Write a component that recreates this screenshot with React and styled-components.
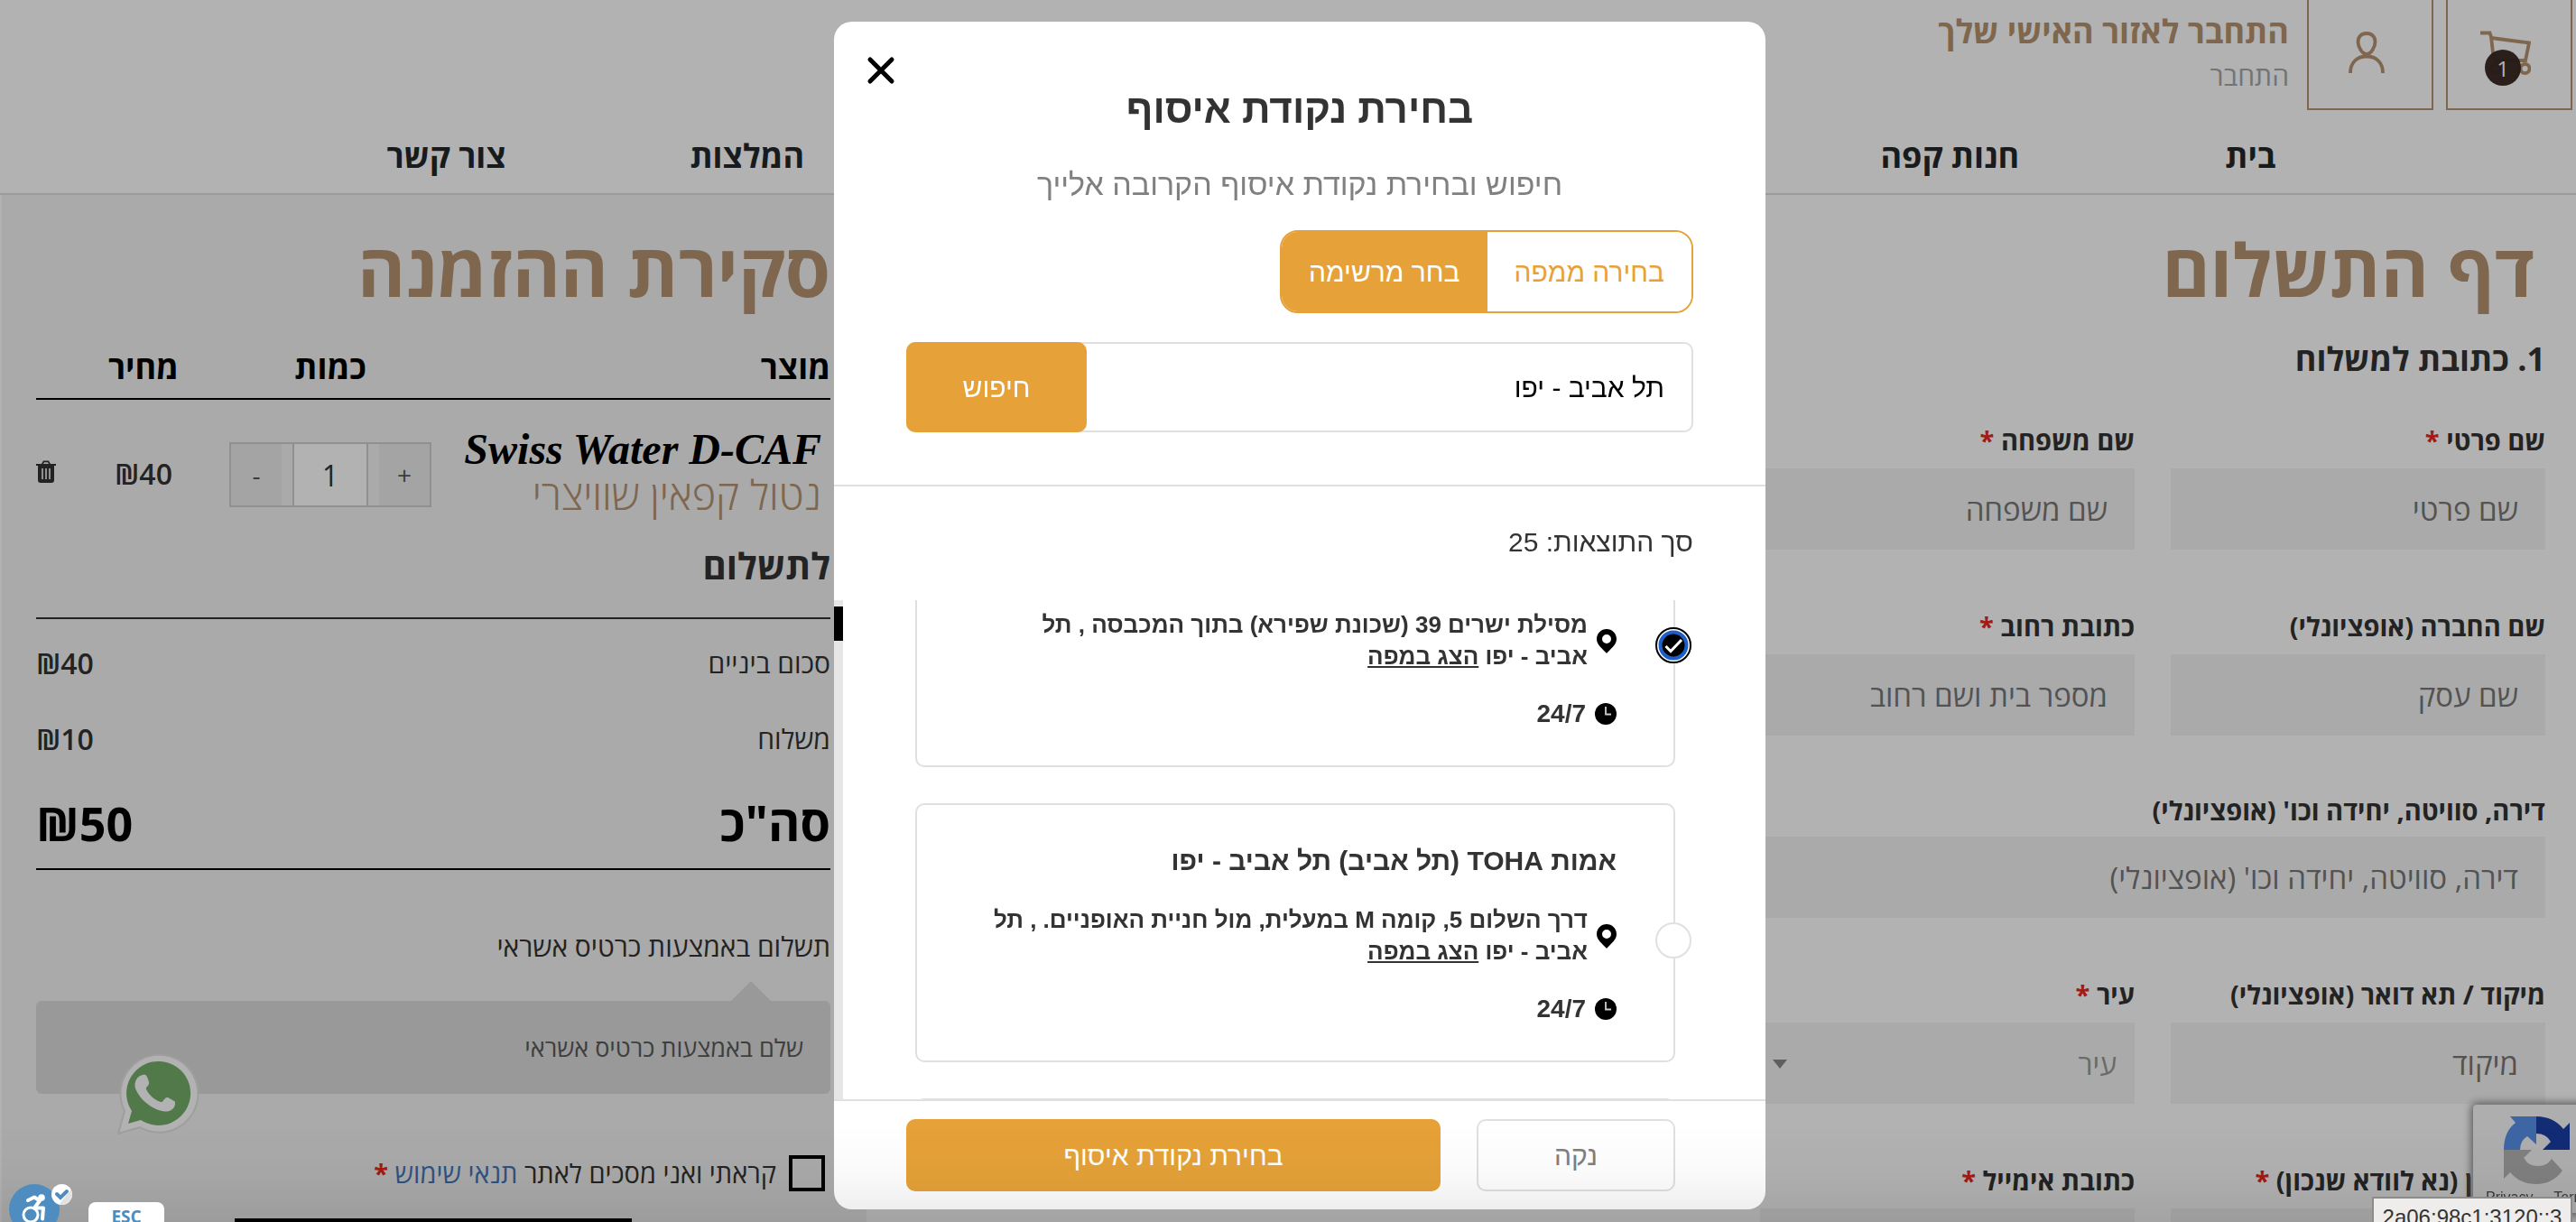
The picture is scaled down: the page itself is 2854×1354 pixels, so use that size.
import React from "react";
import styled, { createGlobalStyle, css } from "styled-components";

const BROWN = "#b69372";
const ORANGE = "#e6a238";
const LINE = "#e0e0e0";

const GlobalStyle = createGlobalStyle`
  *, *::before, *::after { box-sizing: border-box; }
  html, body { margin: 0; height: 100%; }
  body { overflow: hidden; background: #fff; }
  button, input, select { font: inherit; color: inherit; margin: 0; }
  h1, h2, h3, p { margin: 0; }
`;

const Page = styled.div`
  direction: rtl;
  height: 100vh;
  overflow: hidden;
  display: flex;
  flex-direction: column;
  background: #fff;
  color: #333;
  font-family: "Open Sans", "Noto Sans", sans-serif;
  font-size: 28px;
`;

/* Site header */

const Header = styled.header`
  flex: none;
  border-bottom: 2px solid #dedede;
`;

const TopBar = styled.div`
  display: flex;
  align-items: flex-start;
  height: 122px;
  padding-right: 4px;
  gap: 14px;
`;

const IconBox = styled.button`
  position: relative;
  width: 140px;
  height: 122px;
  padding: 0 8px 4px 0;
  display: grid;
  place-items: center;
  background: none;
  border: 2px solid ${BROWN};
  border-top: 0;
  color: ${BROWN};
`;

const CartCount = styled.span`
  position: absolute;
  left: 41px;
  top: 55px;
  width: 40px;
  height: 40px;
  border-radius: 50%;
  background: rgba(55, 38, 33, 0.97);
  color: #fff;
  font-size: 24px;
  line-height: 42px;
`;

const Account = styled.div`
  padding: 7px 6px 0 0;
`;

const AccountTitle = styled.p`
  color: ${BROWN};
  font-size: 36px;
  font-weight: 700;
  line-height: 56px;
`;

const AccountLink = styled.a`
  display: block;
  color: #a6a6a6;
  font-size: 30px;
  line-height: 42px;
  text-decoration: none;
`;

const Nav = styled.nav`
  height: 92px;
  padding: 10px 194px 0 328px;
  display: grid;
  grid-template-columns: repeat(7, 1fr);
  align-items: center;
  text-align: center;
`;

const NavLink = styled.a`
  grid-column: ${(p) => p.$column};
  color: #23272a;
  font-size: 36px;
  font-weight: 700;
  line-height: 48px;
  text-decoration: none;
`;

/* Checkout form */

const Main = styled.main`
  flex: 1;
  min-height: 0;
  display: flex;
  justify-content: space-between;
`;

const Form = styled.form`
  width: 870px;
  margin-right: 34px;
  padding-top: 22px;
`;

const PageTitle = styled.h1`
  padding-right: ${(p) => p.$indent || 0}px;
  color: ${BROWN};
  font-size: 81px;
  font-weight: 700;
  line-height: 120px;
`;

const SectionTitle = styled.h2`
  margin: 16px 0 48px;
  font-size: 36px;
  font-weight: 700;
  line-height: 48px;
`;

const Fields = styled.div`
  display: grid;
  grid-template-columns: 1fr 1fr;
  gap: 67px 40px;
`;

const Field = styled.div`
  grid-column: ${(p) => (p.$wide ? "1 / -1" : "auto")};
`;

const Label = styled.label`
  display: block;
  height: ${(p) => (p.$wide ? 45 : 49)}px;
  font-size: 29px;
  font-weight: 700;
  line-height: ${(p) => (p.$wide ? 32 : 36)}px;
  white-space: nowrap;
`;

const Required = styled.span`
  color: #e8281d;
  font-weight: 700;
`;

const fieldBox = css`
  width: 100%;
  height: 90px;
  border: 0;
  border-radius: 0;
  background: #f4f4f4;
`;

const TextBox = styled.input`
  ${fieldBox}
  padding: 0 30px;
  font-size: 33px;
  &::placeholder { color: #777; opacity: 1; }
`;

const SelectWrap = styled.div`
  position: relative;
`;

const Select = styled.select`
  ${fieldBox}
  appearance: none;
  padding: 0 20px;
  color: #999;
  font-size: 32px;
`;

const SelectArrow = styled.span`
  position: absolute;
  left: 14px;
  top: 41px;
  border: 8px solid transparent;
  border-top: 10px solid #888;
  border-bottom: 0;
`;

/* Order summary */

const Summary = styled.aside`
  width: 960px;
  padding: 22px 40px 0 38px;
  border-left: 2px solid #fff;
  background: #f4f4f4;
`;

const Products = styled.table`
  width: 100%;
  table-layout: fixed;
  border-collapse: collapse;
`;

const HeadCell = styled.th`
  width: ${(p) => p.$width}px;
  height: 84px;
  padding: 0 0 8px;
  border-bottom: 2px solid #000;
  color: #000;
  font-size: 36px;
  font-weight: 700;
  text-align: ${(p) => p.$align || "center"};
  vertical-align: bottom;
  line-height: 52px;
`;

const Cell = styled.td`
  height: 148px;
  padding: ${(p) => p.$padding || 0};
  text-align: center;
  vertical-align: top;
`;

const ProductName = styled.div`
  direction: ltr;
  color: #000;
  font-family: "Liberation Serif", serif;
  font-size: 48px;
  font-style: italic;
  font-weight: 700;
  line-height: 54px;
  text-align: right;
  white-space: nowrap;
`;

const ProductNote = styled.div`
  color: ${BROWN};
  font-size: 45px;
  font-weight: 300;
  line-height: 46px;
  text-align: right;
  white-space: nowrap;
`;

const Quantity = styled.div`
  width: 224px;
  height: 72px;
  margin: 0 auto;
  display: flex;
  justify-content: space-between;
  border: 2px solid #cfcfcf;
`;

const StepButton = styled.button`
  width: 56px;
  padding: 0;
  border: 0;
  background: #ebebeb;
  color: #555;
  font-size: 28px;
`;

const QuantityInput = styled.input`
  width: 84px;
  border: 2px solid #cfcfcf;
  border-width: 0 2px;
  background: #fff;
  font-size: 32px;
  text-align: center;
`;

const Price = styled.span`
  direction: ltr;
  font-size: ${(p) => (p.$total ? 52 : 32)}px;
  font-weight: ${(p) => (p.$total ? 700 : 600)};
`;

const PlainButton = styled.button`
  display: block;
  padding: 0;
  border: 0;
  background: none;
`;

const SubTitle = styled.h3`
  padding-bottom: 20px;
  border-bottom: 2px solid #333;
  font-size: 40px;
  font-weight: 700;
  line-height: 74px;
`;

const Totals = styled.dl`
  margin: 6px 0 0;
  border-bottom: 2px solid #000;
`;

const TotalRow = styled.div`
  display: flex;
  align-items: center;
  justify-content: space-between;
  height: ${(p) => (p.$total ? 102 : 84)}px;
  font-size: ${(p) => (p.$total ? 54 : 30)}px;
  font-weight: ${(p) => (p.$total ? 700 : 400)};
  color: ${(p) => (p.$total ? "#000" : "inherit")};
  dd { margin: 0; direction: ltr; }
`;

const PayMethod = styled.p`
  margin: 65px 0 40px;
  font-size: 30px;
  line-height: 40px;
`;

const PayBox = styled.div`
  position: relative;
  height: 103px;
  padding: 0 30px;
  border-radius: 6px;
  background: #dcdcdc;
  color: #5a5a5a;
  font-size: 27px;
  line-height: 103px;
  &::before {
    content: "";
    position: absolute;
    right: 66px;
    top: -22px;
    border: 22px solid transparent;
    border-top: 0;
    border-bottom-color: #dcdcdc;
  }
`;

const Terms = styled.label`
  display: flex;
  align-items: center;
  gap: 14px;
  margin: 68px 0 30px;
  padding-right: 6px;
  font-size: 29px;
  line-height: 40px;
  a { color: #4378b9; text-decoration: none; }
`;

const TermsBox = styled.input`
  appearance: none;
  width: 40px;
  height: 40px;
  border: 4px solid #000;
`;

const SubmitBar = styled.button`
  display: block;
  width: 440px;
  height: 80px;
  margin: 0 auto;
  border: 0;
  background: #000;
`;

/* Floating widgets */

const WhatsApp = styled.a`
  position: fixed;
  left: 129px;
  bottom: 96px;
  line-height: 0;
`;

const Captcha = styled.div`
  position: fixed;
  right: -26px;
  bottom: 10px;
  width: 140px;
  height: 120px;
  padding: 12px 0 0 33px;
  border-radius: 4px;
  background: #f9f9f9;
  box-shadow: 0 0 10px 2px #808080;
  direction: ltr;
  svg { display: block; }
`;

const CaptchaText = styled.div`
  margin: 5px 0 0 -19px;
  color: #555;
  font-family: "Liberation Sans", sans-serif;
  font-size: 16px;
  line-height: 20px;
  white-space: pre;
`;

const Access = styled.button`
  position: fixed;
  left: 10px;
  bottom: -46px;
  padding: 0;
  border: 0;
  background: none;
  line-height: 0;
`;

const Esc = styled.button`
  position: fixed;
  left: 98px;
  bottom: -10px;
  width: 84px;
  height: 32px;
  padding: 0;
  border: 0;
  border-radius: 8px;
  background: #fff;
  color: #4d8cc0;
  font-size: 19px;
  font-weight: 700;
  line-height: 28px;
`;

const Status = styled.div`
  position: fixed;
  right: 4px;
  bottom: -14px;
  height: 42px;
  width: 222px;
  border: 2px solid #8c8c8c;
  background: #eeedec;
  color: #333;
  direction: ltr;
  text-align: center;
  font-family: "Liberation Sans", sans-serif;
  font-size: 24px;
  line-height: 42px;
`;

const BottomShade = styled.div`
  position: fixed;
  left: 0;
  right: 0;
  bottom: 0;
  height: 110px;
  background: linear-gradient(rgba(0, 0, 0, 0), rgba(0, 0, 0, 0.02) 50%, rgba(0, 0, 0, 0.08));
  pointer-events: none;
`;

/* Pickup dialog */

const Backdrop = styled.div`
  position: fixed;
  inset: 0;
  padding: 24px 0 14px 26px;
  display: flex;
  justify-content: center;
  background: rgba(0, 0, 0, 0.3);
`;

const Dialog = styled.div`
  position: relative;
  width: 1032px;
  display: flex;
  flex-direction: column;
  overflow: hidden;
  border-radius: 20px;
  background: #fff;
  color: #333;
  font-family: "Liberation Sans", Arial, sans-serif;
  font-size: 30px;
`;

const Close = styled(PlainButton)`
  position: absolute;
  left: 36px;
  top: 38px;
  line-height: 0;
`;

const DialogHead = styled.div`
  padding: 69px 80px 58px;
  border-bottom: 2px solid ${LINE};
`;

const DialogTitle = styled.h2`
  font-size: 44px;
  font-weight: 700;
  line-height: 56px;
  text-align: center;
`;

const DialogText = styled.p`
  margin: 33px 0 29px;
  color: #808080;
  font-size: 34px;
  line-height: 44px;
  text-align: center;
`;

const Tabs = styled.div`
  display: inline-flex;
  height: 92px;
  border: 2px solid ${ORANGE};
  border-radius: 20px;
  overflow: hidden;
`;

const Tab = styled.button`
  padding: 2px 30px 0;
  border: 0;
  background: ${(p) => (p.$active ? ORANGE : "#fff")};
  color: ${(p) => (p.$active ? "#fff" : ORANGE)};
`;

const Search = styled.div`
  display: flex;
  height: 100px;
  margin-top: 32px;
  border: 2px solid ${LINE};
  border-radius: 10px;
`;

const SearchInput = styled.input`
  flex: 1;
  min-width: 0;
  padding: 2px 30px 0;
  border: 0;
  background: none;
  color: #000;
`;

const SolidButton = styled.button`
  width: ${(p) => p.$width}px;
  margin: ${(p) => p.$margin || 0};
  padding: 2px 0 0;
  border: 0;
  border-radius: 10px;
  background: ${ORANGE};
  color: #fff;
`;

const ClearButton = styled.button`
  width: 220px;
  padding: 2px 0 0;
  border: 2px solid ${LINE};
  border-radius: 10px;
  background: #fff;
  color: #808080;
`;

const ResultCount = styled.p`
  padding: 40px 80px 42px;
  line-height: 44px;
`;

const ListArea = styled.div`
  flex: 1;
  min-height: 0;
  display: flex;
  justify-content: space-between;
  overflow: hidden;
`;

const Track = styled.div`
  width: 10px;
  padding-top: 7px;
  background: #e6e6e6;
  &::before {
    content: "";
    display: block;
    height: 38px;
    background: #000;
  }
`;

const List = styled.ul`
  flex: 1;
  margin: -102px 0 0;
  padding: 0 100px 0 80px;
  display: flex;
  flex-direction: column;
  gap: 40px;
  list-style: none;
`;

const Card = styled.li`
  position: relative;
  flex: none;
  height: 287px;
  padding: 0 63px 40px;
  display: flex;
  flex-direction: column;
  justify-content: flex-end;
  gap: 28px;
  border: 2px solid ${LINE};
  border-radius: 10px;
  font-weight: 700;
`;

const Radio = styled.span`
  position: absolute;
  right: -20px;
  top: 130px;
  width: 40px;
  height: 40px;
  svg { position: absolute; inset: 0; pointer-events: none; }
`;

const RadioInput = styled.input`
  appearance: none;
  display: block;
  width: 40px;
  height: 40px;
  border: 2px solid ${LINE};
  border-radius: 50%;
  background: #fff;
`;

const PlaceName = styled.label`
  line-height: 40px;
`;

const Info = styled.div`
  display: flex;
  align-items: center;
  gap: 10px;
  font-size: ${(p) => p.$size}px;
  line-height: 35px;
  white-space: nowrap;
  svg { flex: none; }
`;

const MapLink = styled.a`
  color: inherit;
  text-decoration: underline;
`;

const DialogFoot = styled.div`
  display: flex;
  justify-content: space-between;
  height: 122px;
  padding: 20px 100px 20px 80px;
  border-top: 2px solid ${LINE};
`;

const CartIcon = () => (
  <svg width="56" height="49" viewBox="0 0 56 49" fill="none" stroke="currentColor" strokeWidth="3.800">
    <path d="M0 2.500h10.500L12 7l3 26" />
    <path d="M12 8l42 5.500L50 33H15" />
    <circle cx="17" cy="42" r="5" />
    <circle cx="49.500" cy="42" r="5" />
  </svg>
);

const UserIcon = () => (
  <svg width="40" height="46" viewBox="0 0 40 46" fill="none" stroke="currentColor" strokeWidth="3.800">
    <path d="M20 2c-6 0-9.500 4-9.500 9.500C10.500 17 15 25 20 25s9.500-8 9.500-13.500C29.500 6 26 2 20 2z" />
    <path d="M2 46C2 34 9.500 27.500 20 27.500S38 34 38 46" />
  </svg>
);

const TrashIcon = () => (
  <svg width="22" height="25" viewBox="0 0 22 25">
    <path d="M6 4l2-3.500h6L16 4h6v2H0V4zM8 4h6l-1-1.800H9z" fill="#333" fillRule="evenodd" />
    <path d="M2 6h18v16q0 3-3 3H5q-3 0-3-3z" fill="#333" />
    <path d="M7 9v12M11 9v12M15 9v12" stroke="#f4f4f4" strokeWidth="1.600" />
  </svg>
);

const PinIcon = () => (
  <svg width="22" height="27" viewBox="0 0 22 27">
    <path d="M11 0C5 0 0 4.800 0 11c0 7 7 11 11 16 4-5 11-9 11-16C22 4.800 17 0 11 0zm0 6a5 5 0 110 10 5 5 0 010-10z" fill="#000" fillRule="evenodd" />
  </svg>
);

const ClockIcon = () => (
  <svg width="24" height="24" viewBox="0 0 24 24">
    <circle cx="12" cy="12" r="12" fill="#000" />
    <path d="M12 4v8.500h6" fill="none" stroke="#ccc" strokeWidth="1.800" />
  </svg>
);

const CloseIcon = () => (
  <svg width="32" height="32" viewBox="0 0 32 32" stroke="#000" strokeWidth="5" strokeLinecap="round">
    <path d="M4 4l24 24M28 4L4 28" />
  </svg>
);

const CheckedIcon = () => (
  <svg width="40" height="40" viewBox="0 0 40 40">
    <circle cx="20" cy="20" r="19" fill="#fff" stroke="#000" strokeWidth="2" />
    <circle cx="20" cy="20" r="14.500" fill="#000" stroke="#1d5fc6" strokeWidth="4" />
    <path d="M11.500 21l5.500 5.500L29 14" fill="none" stroke="#fff" strokeWidth="3" />
  </svg>
);

const WhatsAppIcon = () => (
  <svg width="92" height="92" viewBox="0 0 92 92">
    <path d="M2 90l7-25A43 43 0 1126 83z" fill="#fff" stroke="#e3e3e3" strokeWidth="2" />
    <path d="M13 79l4-14A35.500 35.500 0 1127 75z" fill="#75ae6b" />
    <path d="M32 26c4-1 5 1 7 8 1 4-4 5-3 8 3 6 9 12 16 14 3 1 4-6 8-5l7 4c2 1 1 7-2 9-5 4-12 3-20-1-10-5-18-14-21-22-2-7 2-14 8-15z" transform="translate(-3 -1)" fill="#fff" />
  </svg>
);

const CaptchaIcon = () => (
  <svg width="76" height="76" viewBox="0 0 76 76">
    <path d="M37 1q19 0 30 14l7-7v30H44l9-9q-5-9-16-9z" fill="#1c3faa" />
    <path d="M37 1H8l6 7Q1 18 1 38h18q0-10 8-15l10 9z" fill="#5a92ec" />
    <path d="M1 38v32l7-7q11 13 29 13 18 0 29-15L54 48q-5 8-15 8-11 0-15-8l-1-1 9-9z" fill="#b8b8b8" />
  </svg>
);

const AccessIcon = () => (
  <svg width="72" height="88" viewBox="0 0 72 88">
    <circle cx="28" cy="28" r="28" fill="#4f8dc1" />
    <circle cx="36" cy="15" r="3.800" fill="#fff" />
    <g fill="none" stroke="#fff" strokeLinecap="round" strokeLinejoin="round">
      <path d="M21 18l7-3.500 6 4-6 8h10l-1 12" strokeWidth="4" />
      <circle cx="24" cy="34" r="8" strokeWidth="3" />
    </g>
    <circle cx="58.500" cy="11.500" r="11.500" fill="#fff" />
    <path d="M68.500 6a11.500 11.500 0 01-13 16.500z" fill="#e2e2e2" />
    <path d="M53 11l4 4 7-7" fill="none" stroke="#4f8dc1" strokeWidth="4" strokeLinecap="round" />
  </svg>
);

const fields = [
  { id: "first", label: "שם פרטי", required: true, hint: "שם פרטי" },
  { id: "last", label: "שם משפחה", required: true, hint: "שם משפחה" },
  { id: "company", label: "שם החברה (אופציונלי)", hint: "שם עסק" },
  { id: "street", label: "כתובת רחוב", required: true, hint: "מספר בית ושם רחוב" },
  { id: "flat", label: "דירה, סוויטה, יחידה וכו' (אופציונלי)", hint: "דירה, סוויטה, יחידה וכו' (אופציונלי)", wide: true },
  { id: "zip", label: "מיקוד / תא דואר (אופציונלי)", hint: "מיקוד" },
  { id: "city", label: "עיר", required: true, hint: "עיר", select: true },
  { id: "phone", label: "הטלפון (נא לוודא שנכון)", required: true },
  { id: "email", label: "כתובת אימייל", required: true },
];

const nav = [
  { text: "בית", column: 1 },
  { text: "חנות קפה", column: 2 },
  { text: "המלצות", column: 6 },
  { text: "צור קשר", column: 7 },
];

const places = [
  { id: "p1", address: "מסילת ישרים 39 (שכונת שפירא) בתוך המכבסה , תל", hours: "24/7", checked: true },
  { id: "p2", name: "אמות TOHA (תל אביב) תל אביב - יפו", address: "דרך השלום 5, קומה M במעלית, מול חניית האופניים. , תל", hours: "24/7" },
];

function FormField({ id, label, required, hint, wide, select }) {
  return (
    <Field $wide={wide}>
      <Label htmlFor={id} $wide={wide}>
        {label}
        {required && <Required> *</Required>}
      </Label>
      {select ? (
        <SelectWrap>
          <Select id={id} defaultValue="">
            <option value="">{hint}</option>
          </Select>
          <SelectArrow />
        </SelectWrap>
      ) : (
        <TextBox id={id} type="text" placeholder={hint} />
      )}
    </Field>
  );
}

function PlaceCard({ id, name, address, hours, checked }) {
  return (
    <Card>
      <Radio>
        <RadioInput type="radio" name="place" id={id} aria-label={name || address} defaultChecked={checked} />
        {checked && <CheckedIcon />}
      </Radio>
      {name && <PlaceName htmlFor={id}>{name}</PlaceName>}
      <Info $size={26}>
        <PinIcon />
        <span>
          {address}
          <br />
          אביב - יפו <MapLink href="#map">הצג במפה</MapLink>
        </span>
      </Info>
      <Info $size={28}>
        <ClockIcon />
        <span>{hours}</span>
      </Info>
    </Card>
  );
}

export default function App() {
  return (
    <Page>
      <GlobalStyle />
      <Header>
        <TopBar>
          <IconBox type="button">
            <CartIcon />
            <CartCount>1</CartCount>
          </IconBox>
          <IconBox type="button">
            <UserIcon />
          </IconBox>
          <Account>
            <AccountTitle>התחבר לאזור האישי שלך</AccountTitle>
            <AccountLink href="#login">התחבר</AccountLink>
          </Account>
        </TopBar>
        <Nav>
          {nav.map((item) => (
            <NavLink key={item.text} href="#nav" $column={item.column}>
              {item.text}
            </NavLink>
          ))}
        </Nav>
      </Header>

      <Main>
        <Form>
          <PageTitle $indent={12}>דף התשלום</PageTitle>
          <SectionTitle>1. כתובת למשלוח</SectionTitle>
          <Fields>
            {fields.map((field) => (
              <FormField key={field.id} {...field} />
            ))}
          </Fields>
        </Form>

        <Summary>
          <PageTitle>סקירת ההזמנה</PageTitle>
          <Products>
            <thead>
              <tr>
                <HeadCell $width={428} $align="right">מוצר</HeadCell>
                <HeadCell $width={252}>כמות</HeadCell>
                <HeadCell $width={162}>מחיר</HeadCell>
                <HeadCell $width={38} />
              </tr>
            </thead>
            <tbody>
              <tr>
                <Cell $padding="28px 10px 0 0">
                  <ProductName>Swiss Water D-CAF</ProductName>
                  <ProductNote>נטול קפאין שוויצרי</ProductNote>
                </Cell>
                <Cell $padding="47px 0 0">
                  <Quantity>
                    <StepButton type="button">+</StepButton>
                    <QuantityInput type="text" aria-label="כמות" defaultValue="1" />
                    <StepButton type="button">-</StepButton>
                  </Quantity>
                </Cell>
                <Cell $padding="60px 0 0">
                  <Price dir="ltr">₪40</Price>
                </Cell>
                <Cell $padding="62px 16px 0 0">
                  <PlainButton type="button" aria-label="הסר">
                    <TrashIcon />
                  </PlainButton>
                </Cell>
              </tr>
            </tbody>
          </Products>
          <SubTitle>לתשלום</SubTitle>
          <Totals>
            <TotalRow>
              <dt>סכום ביניים</dt>
              <dd><Price>₪40</Price></dd>
            </TotalRow>
            <TotalRow>
              <dt>משלוח</dt>
              <dd><Price>₪10</Price></dd>
            </TotalRow>
            <TotalRow $total>
              <dt>סה"כ</dt>
              <dd><Price $total>₪50</Price></dd>
            </TotalRow>
          </Totals>
          <PayMethod>תשלום באמצעות כרטיס אשראי</PayMethod>
          <PayBox>שלם באמצעות כרטיס אשראי</PayBox>
          <Terms>
            <TermsBox type="checkbox" />
            <span>
              קראתי ואני מסכים לאתר <a href="#terms">תנאי שימוש</a>
              <Required> *</Required>
            </span>
          </Terms>
          <SubmitBar type="button" aria-label="שליחת הזמנה" />
        </Summary>
      </Main>

      <WhatsApp href="#whatsapp" aria-label="WhatsApp">
        <WhatsAppIcon />
      </WhatsApp>
      <Captcha>
        <CaptchaIcon />
        <CaptchaText>Privacy  -  Terms</CaptchaText>
      </Captcha>

      <Backdrop>
        <Dialog role="dialog" aria-labelledby="pickup-title">
          <Close type="button" aria-label="סגור">
            <CloseIcon />
          </Close>
          <DialogHead>
            <DialogTitle id="pickup-title">בחירת נקודת איסוף</DialogTitle>
            <DialogText>חיפוש ובחירת נקודת איסוף הקרובה אלייך</DialogText>
            <Tabs>
              <Tab type="button">בחירה ממפה</Tab>
              <Tab type="button" $active>בחר מרשימה</Tab>
            </Tabs>
            <Search>
              <SearchInput type="text" aria-label="עיר" defaultValue="תל אביב - יפו" />
              <SolidButton type="button" $width={200} $margin="-2px 0 -2px -2px">חיפוש</SolidButton>
            </Search>
          </DialogHead>
          <ResultCount>סך התוצאות: 25</ResultCount>
          <ListArea>
            <List>
              {places.map((place) => (
                <PlaceCard key={place.id} {...place} />
              ))}
              <Card />
            </List>
            <Track />
          </ListArea>
          <DialogFoot>
            <ClearButton type="button">נקה</ClearButton>
            <SolidButton type="button" $width={592}>בחירת נקודת איסוף</SolidButton>
          </DialogFoot>
        </Dialog>
      </Backdrop>

      <BottomShade />
      <Access type="button" aria-label="נגישות">
        <AccessIcon />
      </Access>
      <Esc type="button">ESC</Esc>
      <Status>2a06:98c1:3120::3</Status>
    </Page>
  );
}
